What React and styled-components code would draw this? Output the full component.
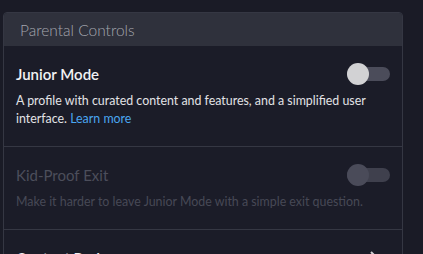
import styled, { createGlobalStyle } from "styled-components";

const GlobalStyle = createGlobalStyle`
  html, body {
    margin: 0;
    padding: 0;
    background: #1a1b26;
    font-family: Lato, "Noto Sans", sans-serif;
  }
`;

const Page = styled.div`
  padding: 12px 0 0 3px;
  height: 254px;
  box-sizing: border-box;
  overflow: hidden;
`;

const Panel = styled.section`
  width: 400px;
  box-sizing: border-box;
  border: 1px solid #353743;
  border-radius: 4px;
  background: #1b1c28;
  overflow: hidden;
`;

const PanelHeader = styled.h2`
  margin: 0;
  height: 33px;
  padding: 0 16px;
  display: flex;
  align-items: center;
  background: #2f313c;
  color: #a4a6ae;
  font-size: 15.5px;
  font-weight: 300;
`;

const Row = styled.div`
  padding: 18px 12px;
  border-top: ${(p) => (p.first ? "none" : "1px solid #353743")};
  display: flex;
  flex-direction: column;
  gap: 8px;
`;

const RowTop = styled.div`
  display: flex;
  align-items: center;
  justify-content: space-between;
  height: 20px;
`;

const Title = styled.span`
  font-size: 15px;
  font-weight: ${(p) => (p.disabled ? 400 : 600)};
  color: ${(p) => (p.disabled ? "#4c4e5b" : "#f2f2f4")};
`;

const Desc = styled.p`
  margin: 0;
  font-size: 12.4px;
  line-height: 18px;
  color: ${(p) => (p.disabled ? "#474956" : "#e2e2e6")};
`;

const Link = styled.a`
  color: #4aa6f0;
  text-decoration: none;
`;

const Track = styled.span`
  position: relative;
  width: 43px;
  height: 22px;
  display: inline-flex;
  align-items: center;

  &::before {
    content: "";
    width: 43px;
    height: 14px;
    border-radius: 7px;
    background: ${(p) => (p.disabled ? "#3f404d" : "#4b4c5a")};
  }

  &::after {
    content: "";
    position: absolute;
    left: 0;
    top: 0;
    width: 22px;
    height: 22px;
    border-radius: 50%;
    background: ${(p) => (p.disabled ? "#4a4b59" : "#d2d2d4")};
  }
`;

const Chevron = styled.svg`
  width: 12px;
  height: 16px;
  margin-right: 10px;
`;

function Toggle({ disabled }) {
  return <Track disabled={disabled} />;
}

export default function App() {
  return (
    <Page>
      <GlobalStyle />
      <Panel>
        <PanelHeader>Parental Controls</PanelHeader>
        <Row first>
          <RowTop>
            <Title>Junior Mode</Title>
            <Toggle />
          </RowTop>
          <Desc>
            A profile with curated content and features, and a simplified user
            interface. <Link href="#">Learn more</Link>
          </Desc>
        </Row>
        <Row>
          <RowTop>
            <Title disabled>Kid-Proof Exit</Title>
            <Toggle disabled />
          </RowTop>
          <Desc disabled>
            Make it harder to leave Junior Mode with a simple exit question.
          </Desc>
        </Row>
        <Row>
          <RowTop>
            <Title>Content Rating</Title>
            <Chevron viewBox="0 0 12 16">
              <path d="M3 2 L9 8 L3 14" fill="none" stroke="#d0d0d4" strokeWidth="2" />
            </Chevron>
          </RowTop>
        </Row>
      </Panel>
    </Page>
  );
}
